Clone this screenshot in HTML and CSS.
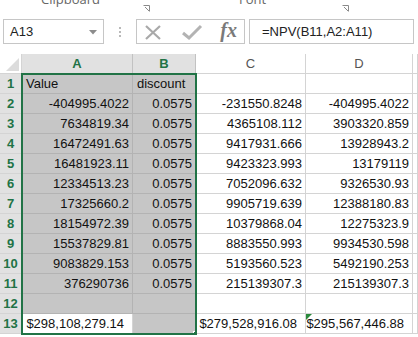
FILE: index.html
```html
<!DOCTYPE html>
<html lang="en">
<head>
<meta charset="UTF-8" />
<title>NPV sheet</title>
<link rel="stylesheet" href="styles.css">
</head>
<body>

<div class="ribbon">
  <span class="group g-clip">Clipboard</span>
  <span class="launch l-clip"><svg width="7" height="7" viewBox="0 0 7 7"><path d="M0.5 0.5h6v6M2 2l4 4" fill="none" stroke="#8a8a8a" stroke-width="1"/></svg></span>
  <span class="group g-font">Font</span>
  <span class="launch l-font"><svg width="7" height="7" viewBox="0 0 7 7"><path d="M0.5 0.5h6v6M2 2l4 4" fill="none" stroke="#8a8a8a" stroke-width="1"/></svg></span>
</div>

<div class="fbar">
  <div class="namebox">
    <span>A13</span>
    <svg class="caret" width="8" height="5" viewBox="0 0 8 5"><path d="M0 0h8L4 4.5z" fill="#8c8c8c"/></svg>
  </div>
  <div class="grip"><i></i><i></i><i></i></div>
  <div class="fxbox">
    <svg width="20" height="18" viewBox="0 0 20 18"><path d="M3 3l14 13M17 3L3 16" stroke="#a9a9a9" stroke-width="2.2" fill="none"/></svg>
    <svg width="22" height="18" viewBox="0 0 22 18"><path d="M2 10l6 5L20 3" stroke="#b3b3b3" stroke-width="3" fill="none"/></svg>
    <span class="fx">fx</span>
  </div>
  <div class="formula">=NPV(B11,A2:A11)</div>
</div>

<div class="sheet">
  <div class="corner"><svg width="13" height="13" viewBox="0 0 13 13"><path d="M13 0v13H0z" fill="#dcdcdc"/></svg></div>
  <div class="ch sel">A</div>
  <div class="ch sel">B</div>
  <div class="ch">C</div>
  <div class="ch">D</div>
  <div class="ch"></div>

  <div class="rh">1</div><div class="c s l">Value</div><div class="c s l">discount</div><div class="c"></div><div class="c"></div><div class="c"></div>
  <div class="rh">2</div><div class="c s">-404995.4022</div><div class="c s">0.0575</div><div class="c">-231550.8248</div><div class="c">-404995.4022</div><div class="c"></div>
  <div class="rh">3</div><div class="c s">7634819.34</div><div class="c s">0.0575</div><div class="c">4365108.112</div><div class="c">3903320.859</div><div class="c"></div>
  <div class="rh">4</div><div class="c s">16472491.63</div><div class="c s">0.0575</div><div class="c">9417931.666</div><div class="c">13928943.2</div><div class="c"></div>
  <div class="rh">5</div><div class="c s">16481923.11</div><div class="c s">0.0575</div><div class="c">9423323.993</div><div class="c">13179119</div><div class="c"></div>
  <div class="rh">6</div><div class="c s">12334513.23</div><div class="c s">0.0575</div><div class="c">7052096.632</div><div class="c">9326530.93</div><div class="c"></div>
  <div class="rh">7</div><div class="c s">17325660.2</div><div class="c s">0.0575</div><div class="c">9905719.639</div><div class="c">12388180.83</div><div class="c"></div>
  <div class="rh">8</div><div class="c s">18154972.39</div><div class="c s">0.0575</div><div class="c">10379868.04</div><div class="c">12275323.9</div><div class="c"></div>
  <div class="rh">9</div><div class="c s">15537829.81</div><div class="c s">0.0575</div><div class="c">8883550.993</div><div class="c">9934530.598</div><div class="c"></div>
  <div class="rh">10</div><div class="c s">9083829.153</div><div class="c s">0.0575</div><div class="c">5193560.523</div><div class="c">5492190.253</div><div class="c"></div>
  <div class="rh">11</div><div class="c s">376290736</div><div class="c s">0.0575</div><div class="c">215139307.3</div><div class="c">215139307.3</div><div class="c"></div>
  <div class="rh">12</div><div class="c s"></div><div class="c s"></div><div class="c"></div><div class="c"></div><div class="c"></div>
  <div class="rh">13</div><div class="c cur">$298,108,279.14</div><div class="c s"></div><div class="c cur">$279,528,916.08</div><div class="c cur warn">$295,567,446.88</div><div class="c"></div>

  <!-- selection outline A1:B13 -->
  <div class="selbox"><span class="handle"></span></div>
</div>

</body>
</html>
```

FILE: styles.css
```css
body {
  margin: 0;
  font-family: "Liberation Sans", Arial, sans-serif;
  background: #fff;
  width: 418px;
  height: 337px;
  overflow: hidden;
}

/* --- ribbon group labels (cut off at the top) --- */
.ribbon {
  position: relative;
  height: 12px;
  overflow: hidden;
}
.group {
  position: absolute;
  top: -10px;
  font-family: "Open Sans", sans-serif;
  font-size: 13px;
  color: #666;
}
.g-clip { left: 41px; }
.g-font { left: 239px; }
.launch {
  position: absolute;
  top: -2px;
}
.l-clip { left: 143px; }
.l-font { left: 342px; }

/* --- formula bar --- */
.fbar {
  display: flex;
  align-items: center;
  height: 25px;
  margin-top: 7px;
  padding-left: 3px;
}
.namebox {
  box-sizing: border-box;
  width: 101px;
  height: 25px;
  border: 1px solid #c6c6c6;
  display: flex;
  align-items: center;
  justify-content: space-between;
  padding: 0 6px 0 6px;
  font-size: 13px;
  color: #222;
}
.caret { margin-top: 1px; }
.grip {
  width: 32px;
  display: flex;
  flex-direction: column;
  align-items: center;
  gap: 2px;
}
.grip i {
  width: 2px;
  height: 2px;
  background: #b9b9b9;
}
.fxbox {
  box-sizing: border-box;
  width: 109px;
  height: 25px;
  border: 1px solid #c6c6c6;
  display: flex;
  align-items: center;
  justify-content: space-between;
  padding: 0 7px 0 6px;
}
.fx {
  font-family: "Liberation Serif", serif;
  font-style: italic;
  font-weight: bold;
  font-size: 20px;
  color: #7a7a7a;
  margin-top: -3px;
}
.formula {
  box-sizing: border-box;
  width: 165px;
  height: 25px;
  margin-left: 4px;
  border: 1px solid #c6c6c6;
  padding-left: 12px;
  font-size: 13px;
  line-height: 23px;
  color: #222;
}

/* --- grid --- */
.sheet {
  position: relative;
  margin-top: 10px;
  display: grid;
  grid-template-columns: 22px 111px 63px 110px 107px 5px;
  grid-auto-rows: 20px;
  font-size: 13px;
}
.sheet > div {
  box-sizing: border-box;
  border-right: 1px solid #d4d4d4;
  border-bottom: 1px solid #d4d4d4;
  white-space: nowrap;
  overflow: hidden;
}
.corner {
  display: flex;
  align-items: flex-end;
  justify-content: flex-end;
  padding: 0 2px 2px 0;
  background: #fff;
}
.ch {
  text-align: center;
  line-height: 19px;
  color: #555;
  background: #fff;
}
.ch.sel {
  background: #e1e1e1;
  color: #217346;
  font-weight: bold;
  border-right-color: #c2c2c2 !important;
}
.rh {
  background: #e1e1e1;
  color: #217346;
  font-weight: bold;
  text-align: center;
  line-height: 20px;
}
.c {
  text-align: right;
  padding-right: 3px;
  line-height: 20px;
  color: #111;
}
.c.l {
  text-align: left;
  padding-left: 4px;
}
.c.s {
  background: #c6c6c6;
  border-color: #b3b3b3 !important;
}
.c.cur {
  padding-right: 8px;
}
.warn {
  position: relative;
}
.warn::before {
  content: "";
  position: absolute;
  left: 0;
  top: 0;
  border-top: 6px solid #2a8a3c;
  border-right: 6px solid transparent;
}

/* --- selection outline --- */
.selbox {
  position: absolute;
  left: 21px;
  top: 19px;
  width: 176px;
  height: 262px;
  box-sizing: border-box;
  border: 2px solid #217346 !important;
}
.handle {
  position: absolute;
  right: -5px;
  bottom: -5px;
  width: 5px;
  height: 5px;
  background: #217346;
  border: 1px solid #fff;
}
```
